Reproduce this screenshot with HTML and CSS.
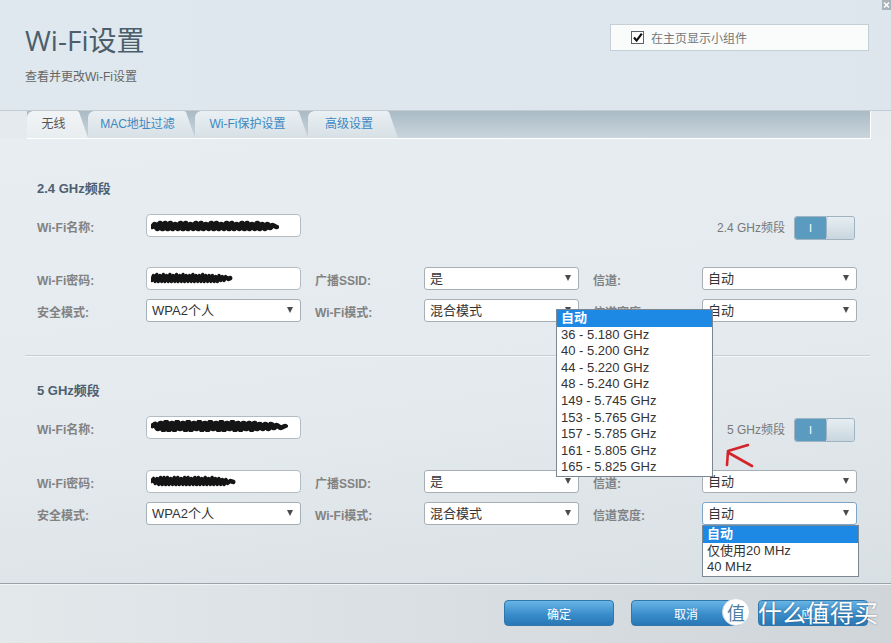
FILE: index.html
```html
<!DOCTYPE html>
<html>
<head>
    <meta charset="utf-8">
    <link rel="stylesheet" href="styles.css">
</head>
<body>
<div class="page">
    <header class="top">
        <div class="title-block">
            <h1 class="title">Wi-Fi设置</h1>
            <p class="subtitle">查看并更改Wi-Fi设置</p>
        </div>
        <label class="widget-box">
            <span class="checkbox">
                <svg viewBox="0 0 13 13"><path d="M3 6.5 L5.6 9.6 L10.8 2.6" stroke="#111" stroke-width="2.2" fill="none"/></svg>
            </span>
            在主页显示小组件
        </label>
        <span class="close-btn">
            <svg viewBox="0 0 9 10"><path d="M2 2.5 L7 7.5 M7 2.5 L2 7.5" stroke="#fff" stroke-width="1.5"/></svg>
        </span>
    </header>

    <nav class="tabs">
        <a class="tab tab-wireless active">无线</a>
        <a class="tab tab-mac">MAC地址过滤</a>
        <a class="tab tab-wps">Wi-Fi保护设置</a>
        <a class="tab tab-adv">高级设置</a>
    </nav>

    <main class="content">
        <!-- 2.4 GHz -->
        <section class="band band-24">
            <h2 class="band-title">2.4 GHz频段</h2>
            <div class="field-row">
                <span class="lbl">Wi-Fi名称:</span>
                <span class="input">
                    <svg class="blot blot-name24" viewBox="0 0 100 12" preserveAspectRatio="none"><path d="M1 7 L3 4 L5 9 L7 3 L9 9 L11 3 L13 9 L15 3 L17 9 L19 4 L21 9 L23 3 L25 9 L27 3 L29 9 L31 4 L33 9 L35 3 L37 9 L39 3 L41 9 L43 4 L45 9 L47 3 L49 9 L51 3 L53 9 L55 4 L57 9 L59 3 L61 9 L63 3 L65 9 L67 4 L69 9 L71 3 L73 9 L75 3 L77 9 L79 4 L81 9 L83 3 L85 9 L87 4 L89 9 L91 4 L93 8 L95 5 L98 7"/></svg>
                </span>
                <div class="switch-wrap">
                    <span class="switch-lbl">2.4 GHz频段</span>
                    <span class="switch"><span class="switch-on">I</span><span class="switch-knob"></span></span>
                </div>
            </div>
            <div class="field-grid">
                <span class="lbl">Wi-Fi密码:</span>
                <span class="input">
                    <svg class="blot blot-pass24" viewBox="0 0 100 12" preserveAspectRatio="none"><path d="M1 8 L3 4 L5 9 L7 3 L9 9 L11 4 L13 9 L15 3 L17 9 L19 4 L21 9 L23 3 L25 9 L27 4 L29 9 L31 3 L33 9 L35 4 L37 9 L39 3 L41 9 L43 4 L45 9 L47 4 L49 9 L51 3 L53 9 L55 4 L57 9 L59 4 L61 9 L63 3 L65 9 L67 4 L69 9 L71 4 L73 9 L75 4 L77 9 L79 5 L81 9 L83 4 L85 8 L87 5 L89 8 L91 5 L94 7 L97 6"/></svg>
                </span>
                <span class="lbl lbl-mid">广播SSID:</span>
                <span class="select">是</span>
                <span class="lbl lbl-mid">信道:</span>
                <span class="select">自动</span>

                <span class="lbl">安全模式:</span>
                <span class="select">WPA2个人</span>
                <span class="lbl lbl-mid">Wi-Fi模式:</span>
                <span class="select">混合模式</span>
                <span class="lbl lbl-mid">信道宽度:</span>
                <span class="select">自动</span>
            </div>
        </section>

        <div class="divider"></div>

        <!-- 5 GHz -->
        <section class="band band-5">
            <h2 class="band-title">5 GHz频段</h2>
            <div class="field-row">
                <span class="lbl">Wi-Fi名称:</span>
                <span class="input">
                    <svg class="blot blot-name5" viewBox="0 0 100 12" preserveAspectRatio="none"><path d="M1 6 L3 4 L5 9 L7 3 L9 10 L11 2 L13 10 L15 3 L17 10 L19 2 L21 9 L23 3 L25 10 L27 2 L29 10 L31 3 L33 9 L35 2 L37 10 L39 3 L41 10 L43 2 L45 9 L47 3 L49 10 L51 2 L53 10 L55 3 L57 9 L59 2 L61 10 L63 3 L65 10 L67 3 L69 9 L71 3 L73 10 L75 3 L77 9 L79 4 L81 9 L83 4 L85 9 L87 4 L89 8 L91 5 L94 8 L97 6"/></svg>
                </span>
                <div class="switch-wrap">
                    <span class="switch-lbl">5 GHz频段</span>
                    <span class="switch"><span class="switch-on">I</span><span class="switch-knob"></span></span>
                </div>
            </div>
            <div class="field-grid">
                <span class="lbl">Wi-Fi密码:</span>
                <span class="input">
                    <svg class="blot blot-pass5" viewBox="0 0 100 12" preserveAspectRatio="none"><path d="M1 6 L3 4 L5 8 L7 4 L9 9 L11 3 L13 9 L15 3 L17 9 L19 3 L21 9 L23 4 L25 9 L27 3 L29 9 L31 3 L33 9 L35 4 L37 9 L39 3 L41 9 L43 3 L45 9 L47 4 L49 9 L51 3 L53 9 L55 3 L57 9 L59 4 L61 9 L63 3 L65 9 L67 4 L69 9 L71 3 L73 9 L75 4 L77 9 L79 4 L81 9 L83 5 L85 9 L87 5 L89 8 L92 6 L96 7"/></svg>
                </span>
                <span class="lbl lbl-mid">广播SSID:</span>
                <span class="select">是</span>
                <span class="lbl lbl-mid">信道:</span>
                <span class="select">自动</span>

                <span class="lbl">安全模式:</span>
                <span class="select">WPA2个人</span>
                <span class="lbl lbl-mid">Wi-Fi模式:</span>
                <span class="select">混合模式</span>
                <span class="lbl lbl-mid">信道宽度:</span>
                <span class="select focused">自动</span>
            </div>
        </section>
    </main>

    <footer class="footer">
        <button class="btn">确定</button>
        <button class="btn">取消</button>
        <button class="btn">应用</button>
        <div class="watermark">
            <span class="wm-badge">值</span>
            <span class="wm-text">什么值得买</span>
        </div>
    </footer>

    <!-- open dropdowns -->
    <ul class="dropdown dropdown-channel">
        <li class="picked">自动</li>
        <li>36 - 5.180 GHz</li>
        <li>40 - 5.200 GHz</li>
        <li>44 - 5.220 GHz</li>
        <li>48 - 5.240 GHz</li>
        <li>149 - 5.745 GHz</li>
        <li>153 - 5.765 GHz</li>
        <li>157 - 5.785 GHz</li>
        <li>161 - 5.805 GHz</li>
        <li>165 - 5.825 GHz</li>
    </ul>
    <ul class="dropdown dropdown-width">
        <li class="picked">自动</li>
        <li>仅使用20 MHz</li>
        <li>40 MHz</li>
    </ul>

    <svg class="red-mark" viewBox="0 0 36 30">
        <path d="M26 4 L6 10 L5 24" stroke="#d3242a" stroke-width="2.6" fill="none" stroke-linecap="round" stroke-linejoin="round"/>
        <path d="M7 12 L30 25" stroke="#d3242a" stroke-width="2.6" fill="none" stroke-linecap="round"/>
    </svg>
</div>
</body>
</html>
```

FILE: styles.css
```css
body {
    margin: 0;
    padding: 0;
    background: #e4eaee;
    font-family: "Liberation Sans", "Noto Sans CJK SC", sans-serif;
}

.page {
    position: relative;
    width: 891px;
    height: 643px;
    overflow: hidden;
}

/* header */
.top {
    display: flex;
    justify-content: space-between;
    align-items: flex-start;
    height: 111px;
    padding: 0 22px 0 25px;
    box-sizing: border-box;
    background: linear-gradient(to right, #dfe8ee, #dde6ec);
    border-bottom: 1px solid #c3ccd2;
}

.title {
    margin: 22px 0 0;
    font-family: "Open Sans", "Noto Sans CJK SC", sans-serif;
    font-size: 28px;
    font-weight: 400;
    line-height: 36px;
    color: #4c5e6c;
}

.subtitle {
    margin: 11px 0 0;
    font-size: 12px;
    line-height: 16px;
    color: #666;
}

.widget-box {
    display: flex;
    align-items: center;
    gap: 7px;
    width: 259px;
    height: 27px;
    margin-top: 24px;
    padding-left: 20px;
    box-sizing: border-box;
    background: #fafbfb;
    border: 1px solid #c6cfd5;
    font-size: 12px;
    color: #777;
}

.checkbox {
    display: block;
    width: 13px;
    height: 13px;
    box-sizing: border-box;
    border: 1px solid #59636b;
    background: #fff;
}

.checkbox svg {
    display: block;
    width: 13px;
    height: 13px;
    margin: -1px 0 0 -1px;
}

.close-btn {
    position: absolute;
    top: 0;
    right: 0;
    width: 9px;
    height: 10px;
    background: #a8b3ba;
}

.close-btn svg {
    display: block;
    width: 9px;
    height: 10px;
}

/* tabs */
.tabs {
    display: flex;
    width: 843px;
    height: 27px;
    margin-left: 27px;
    background: linear-gradient(#aabbc6, #c9d5dc);
    border-right: 1px solid #fff;
    border-bottom: 1px solid #fff;
}

.tab {
    display: block;
    height: 27px;
    padding-right: 8px;
    box-sizing: border-box;
    line-height: 27px;
    text-align: center;
    font-size: 12px;
    color: #3d88c2;
    background: linear-gradient(#eaf0f3, #d7e0e6);
    clip-path: polygon(0 100%, 0 6px, 1px 3px, 3px 1px, 6px 0, calc(100% - 11px) 0, calc(100% - 9px) 1px, 100% 100%);
}

.tab.active {
    color: #555;
    background: linear-gradient(#f1f4f6, #e8edf0);
}

.tab-wireless { width: 61px; }
.tab-mac { width: 107px; }
.tab-wps { width: 113px; }
.tab-adv { width: 90px; }

/* main panel */
.content {
    height: 444px;
    background: linear-gradient(172deg, #e7edf1 0%, #e4eaee 55%, #d9e0e4 100%);
}

.band {
    padding-left: 37px;
}

.band-title {
    margin: 0 0 17px;
    font-size: 13px;
    line-height: 16px;
    font-weight: bold;
    color: #4d6070;
}

.band-24 .band-title { padding-top: 42px; }
.band-5 .band-title { padding-top: 26px; }

.field-row,
.field-grid {
    display: grid;
    grid-template-columns: 109px 155px 123px 155px 123px 155px;
    grid-auto-rows: 23px;
}

.field-row {
    margin-bottom: 30px;
}

.band-5 .field-row {
    margin-bottom: 31px;
}

.field-grid {
    row-gap: 9px;
}

.lbl {
    height: 23px;
    line-height: 28px;
    font-size: 12px;
    font-weight: bold;
    color: #828282;
    white-space: nowrap;
}

.lbl-mid {
    padding-left: 14px;
}

.input,
.select {
    position: relative;
    display: block;
    height: 23px;
    box-sizing: border-box;
    background: #fff;
    border: 1px solid #b3bcc2;
    border-radius: 4px;
}

.select {
    padding-left: 5px;
    font-size: 13px;
    line-height: 21px;
    color: #333;
    border-color: #a6afb5;
    border-radius: 3px;
}

.select::after {
    content: '';
    position: absolute;
    right: 7px;
    top: 7px;
    border-left: 3px solid transparent;
    border-right: 3px solid transparent;
    border-top: 6px solid #4a4a4a;
}

.select.focused {
    border-color: #7ea5c6;
}

/* scribbled-out values */
.blot {
    position: absolute;
    top: 5px;
    left: 4px;
    height: 12px;
    fill: none;
    stroke: #151515;
    stroke-width: 4.5;
    stroke-linejoin: round;
    stroke-linecap: round;
}

.blot-name24 { width: 128px; }
.blot-pass24 { width: 82px; top: 4px; }
.blot-name5 { width: 138px; top: 3px; }
.blot-pass5 { width: 86px; top: 4px; }

.switch-wrap {
    grid-column: 3 / 7;
    justify-self: end;
    display: flex;
    align-items: flex-start;
    gap: 9px;
    height: 23px;
    margin-right: 2px;
}

.switch-lbl {
    font-size: 12px;
    line-height: 28px;
    color: #787878;
}

.switch {
    display: flex;
    width: 61px;
    height: 24px;
    margin-top: 2px;
    border-radius: 3px;
    overflow: hidden;
    border: 1px solid #9fb3c0;
    box-sizing: border-box;
}

.switch-on {
    width: 31px;
    line-height: 22px;
    text-align: center;
    font-size: 11px;
    color: #fff;
    background: #5b9bbf;
}

.switch-knob {
    flex: 1;
    background: linear-gradient(#e6eef2, #c9d6de);
    border-left: 1px solid #9fb3c0;
    border-radius: 3px;
}

.divider {
    width: 845px;
    margin: 33px 0 0 25px;
    border-top: 1px solid #c6cfd4;
    border-bottom: 1px solid #f3f6f8;
}

/* footer */
.footer {
    position: relative;
    display: flex;
    justify-content: flex-end;
    gap: 17px;
    height: 60px;
    padding: 16px 23px 0 0;
    box-sizing: border-box;
    background: linear-gradient(to right, #e3e8eb, #cfd5d9);
    border-top: 1px solid #9aa2a7;
    box-shadow: inset 0 1px 0 #f2f4f5;
}

.btn {
    width: 110px;
    height: 26px;
    padding: 0;
    font-family: "Liberation Sans", "Noto Sans CJK SC", sans-serif;
    font-size: 12px;
    color: #fff;
    background: linear-gradient(#68b5e5, #3a8ccb 55%, #2a78b5);
    border: 1px solid #3277ac;
    border-radius: 4px;
}

.watermark {
    position: absolute;
    left: 722px;
    top: 14px;
    display: flex;
    align-items: center;
    gap: 8px;
}

.wm-badge {
    width: 28px;
    height: 28px;
    border-radius: 50%;
    background: #fff;
    border: 1px solid #cfd8de;
    box-sizing: border-box;
    text-align: center;
    line-height: 26px;
    font-size: 18px;
    font-family: "Noto Sans CJK SC", sans-serif;
    color: #4e7ea3;
}

.wm-text {
    font-family: "Noto Sans CJK SC", sans-serif;
    font-size: 24px;
    line-height: 28px;
    color: #fff;
    text-shadow: 0 0 2px rgba(40, 60, 80, 0.6);
}

/* open select lists */
.dropdown {
    position: absolute;
    margin: 0;
    padding: 0;
    list-style: none;
    background: #fff;
    border: 1px solid #7b8893;
    font-size: 13px;
    color: #333;
}

.dropdown li {
    padding-left: 4px;
    line-height: 16.6px;
}

.dropdown li.picked {
    background: #1e88e5;
    color: #fff;
    font-weight: bold;
}

.dropdown-channel {
    left: 556px;
    top: 309px;
    width: 155px;
}

.dropdown-width {
    left: 702px;
    top: 525px;
    width: 155px;
}

.red-mark {
    position: absolute;
    left: 722px;
    top: 441px;
    width: 36px;
    height: 30px;
}
```
